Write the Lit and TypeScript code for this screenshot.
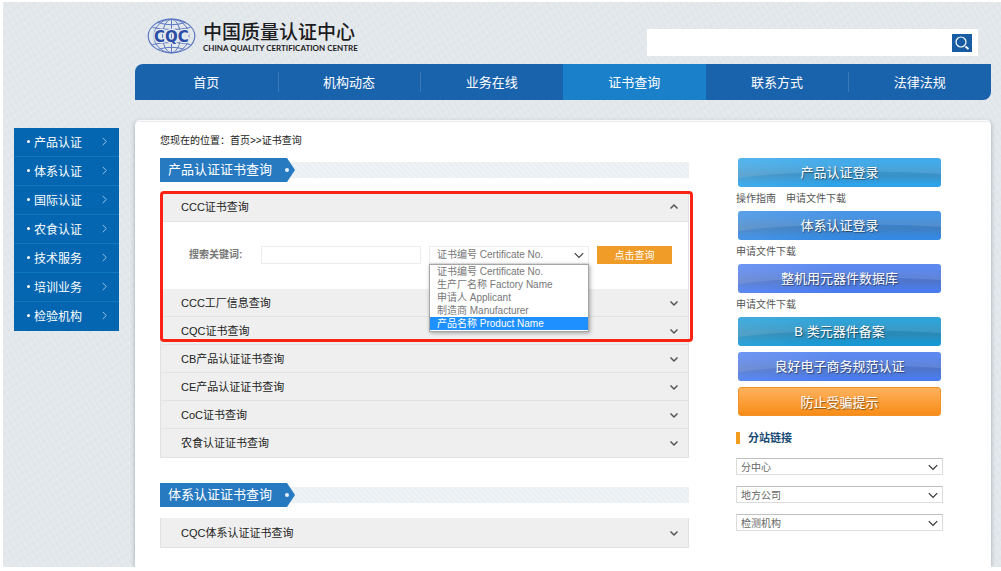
import { LitElement, html, css, svg } from "lit";
import { customElement, property, state } from "lit/decorators.js";
import { classMap } from "lit/directives/class-map.js";

const chevron = (dir: "up" | "down" | "right", cls: string) => {
  const d = { up: "M1.5 6.5 5 3l3.5 3.5", down: "M1.5 3.5 5 7l3.5-3.5", right: "M3 1l4 4-4 4" }[dir];
  return html`<svg class=${cls} viewBox="0 0 10 10" aria-hidden="true">${svg`<path d=${d} fill="none" stroke="currentColor"/>`}</svg>`;
};

@customElement("site-logo")
export class SiteLogo extends LitElement {
  static styles = css`
    :host { display: block; }
    .brand { display: flex; align-items: center; gap: 7px; color: #1c1c1e; text-decoration: none; }
    .globe { width: 49px; height: 36px; flex: none; }
    .mark { font: bold 15px "DejaVu Sans", sans-serif; }
    .names { display: flex; flex-direction: column; }
    .zh { font: 500 19px/24px "Noto Sans CJK SC", sans-serif; }
    .en { font: 700 8px/10px Lato, sans-serif; white-space: nowrap; }
  `;
  render() {
    return html`<a class="brand" href="#">
      <svg class="globe" viewBox="0 0 49 36" role="img" aria-label="CQC">
        <g fill="none" stroke="#5b77c2" stroke-width="1">
          <ellipse cx="24.5" cy="18" rx="23.3" ry="16.8" stroke-width="1.2" />
          <ellipse cx="24.5" cy="18" rx="17.5" ry="16.8" />
          <ellipse cx="24.5" cy="18" rx="9" ry="16.8" />
          <path d="M24.5 1v34M11 4.5q13.500 4.500 27 0M5.500 9.500q19 4 38 0M5.500 26.500q19-4 38 0M11 31.500q13.500-4.500 27 0" />
        </g>
        <text class="mark" x="24.500" y="23.500" text-anchor="middle" fill="#2c4da6" stroke="#e6ebf0" stroke-width="2.500" paint-order="stroke">CQC</text>
      </svg>
      <span class="names">
        <span class="zh">中国质量认证中心</span>
        <span class="en">CHINA QUALITY CERTIFICATION CENTRE</span>
      </span>
    </a>`;
  }
}

@customElement("section-title")
export class SectionTitle extends LitElement {
  @property() text = "";
  static styles = css`
    :host { display: block; }
    .bar { display: flex; align-items: center; }
    .title {
      position: relative; z-index: 1; display: flex; align-items: center; gap: 13px; flex: none;
      box-sizing: border-box; width: 135px; height: 24px; margin: 0; padding-left: 8px;
      background: #2779c0; color: #fff; font-weight: 400; font-size: 13px; line-height: 24px;
      clip-path: polygon(0 0, 127px 0, 100% 50%, 127px 100%, 0 100%);
    }
    .dot { width: 4px; height: 4px; border-radius: 50%; background: #e4f0fa; }
    .stripe {
      flex: 1; height: 16px; margin-left: -8px;
      background: repeating-linear-gradient(45deg, #e9eff3 0 2px, #eff3f6 2px 4px);
    }
  `;
  render() {
    return html`<div class="bar"><h2 class="title">${this.text}<span class="dot"></span></h2><div class="stripe"></div></div>`;
  }
}

@customElement("link-select")
export class LinkSelect extends LitElement {
  @property() label = "";
  static styles = css`
    :host { display: block; }
    .box { display: grid; align-items: center; }
    .box > * { grid-area: 1 / 1; }
    .field {
      appearance: none; box-sizing: border-box; width: 100%; height: 17px; margin: 0; padding: 0 20px 0 4px;
      border: 1px solid #dcdcdc; border-top-color: #bfbfbf; border-radius: 0; background: #fff;
      color: #666; font: 10px/15px "Noto Sans CJK SC", sans-serif;
    }
    .arrow { justify-self: end; width: 12px; height: 12px; margin-right: 4px; color: #333; pointer-events: none; }
  `;
  render() {
    return html`<div class="box">
      <select class="field" aria-label=${this.label}><option>${this.label}</option></select>
      ${chevron("down", "arrow")}
    </div>`;
  }
}

const OPTIONS = ["证书编号 Certificate No.", "生产厂名称 Factory Name", "申请人 Applicant", "制造商 Manufacturer", "产品名称 Product Name"];

@customElement("search-form")
export class SearchForm extends LitElement {
  @state() private choice = 0;
  static styles = css`
    :host { display: block; }
    .form { display: flex; align-items: center; gap: 8px; padding: 24px 16px 25px 28px; background: #fff; }
    .label { flex: none; width: 64px; color: #777; font-weight: 700; font-size: 10px; line-height: 16px; }
    .input, .select {
      box-sizing: border-box; width: 100%; height: 18px; margin: 0; border: 1px solid #ececec; border-radius: 0;
      background: #fff; color: #777; font: 10px/16px "Liberation Sans", "Noto Sans CJK SC", sans-serif;
    }
    .input { flex: 1; min-width: 0; padding: 0 6px; }
    .select { appearance: none; padding: 0 20px 0 7px; }
    .picker { position: relative; display: grid; align-items: center; flex: none; width: 160px; }
    .picker > .select, .picker > .arrow { grid-area: 1 / 1; }
    .arrow { justify-self: end; width: 12px; height: 12px; margin-right: 4px; color: #444; pointer-events: none; }
    .menu {
      position: absolute; z-index: 5; top: 100%; left: 0; right: 0; margin: 0; list-style: none;
      background: #fff; border: 1px solid #a5a5a5; padding: 0 0 1px; box-shadow: 1px 1px 4px rgba(0, 0, 0, .35);
    }
    .option { padding: 0 7px; color: #777; font: 10px/13px "Liberation Sans", "Noto Sans CJK SC", sans-serif; white-space: nowrap; }
    .current { background: #1e90ff; color: #fff; }
    .submit { flex: none; width: 75px; height: 18px; padding: 0; border: 0; background: #f09c28; color: #fff; font: 10px/18px "Noto Sans CJK SC", sans-serif; }
  `;
  render() {
    return html`<form class="form" @submit=${(e: Event) => e.preventDefault()}>
      <label class="label" for="keyword">搜索关键词:</label>
      <input class="input" id="keyword" type="text" />
      <div class="picker">
        <select class="select" aria-label="查询类型" @change=${(e: Event) => (this.choice = (e.target as HTMLSelectElement).selectedIndex)}>
          ${OPTIONS.map((o, i) => html`<option ?selected=${i === this.choice}>${o}</option>`)}
        </select>
        ${chevron("down", "arrow")}
        <ul class="menu">
          ${OPTIONS.map((o, i) => html`<li class=${classMap({ option: true, current: i === 4 })}>${o}</li>`)}
        </ul>
      </div>
      <button class="submit">点击查询</button>
    </form>`;
  }
}

const NAV = ["首页", "机构动态", "业务在线", "证书查询", "联系方式", "法律法规"];
const SIDE = ["产品认证", "体系认证", "国际认证", "农食认证", "技术服务", "培训业务", "检验机构"];
const ROWS = ["CCC工厂信息查询", "CQC证书查询", "CB产品认证证书查询", "CE产品认证证书查询", "CoC证书查询", "农食认证证书查询"];
const LOGINS = [
  { text: "产品认证登录", tone: "sky", links: ["操作指南", "申请文件下载"] },
  { text: "体系认证登录", tone: "azure", links: ["申请文件下载"] },
  { text: "整机用元器件数据库", tone: "indigo", links: ["申请文件下载"] },
  { text: "B 类元器件备案", tone: "teal", links: [] },
  { text: "良好电子商务规范认证", tone: "indigo", links: [] },
  { text: "防止受骗提示", tone: "orange", links: [] },
];

@customElement("app-root")
export class AppRoot extends LitElement {
  static styles = css`
    :host {
      display: block; box-sizing: border-box; min-height: 100vh; padding: 2px 0 4px 3px; background: #fff;
      color: #222; font-family: "Liberation Sans", "Noto Sans CJK SC", sans-serif; font-size: 10px;
    }
    .page {
      display: grid; grid-template-columns: 105px minmax(0, 1fr); grid-template-rows: auto auto 1fr; column-gap: 16px;
      box-sizing: border-box; min-height: calc(100vh - 6px); padding: 0 10px 0 11px; overflow: hidden;
      background:
        repeating-linear-gradient(60deg, rgba(255, 255, 255, .12) 0 2px, transparent 2px 5px),
        repeating-linear-gradient(-35deg, rgba(190, 203, 212, .08) 0 2px, transparent 2px 7px),
        #e2e7eb;
    }
    .header { grid-column: 2; display: flex; justify-content: space-between; align-items: flex-start; height: 46px; padding: 16px 13px 0 12px; }
    .search { display: flex; align-items: center; width: 331px; height: 27px; margin-top: 11px; background: #fff; }
    .query { flex: 1; min-width: 0; height: 25px; padding: 0 8px; border: 0; background: none; font: inherit; }
    .go { width: 20px; height: 18px; margin-right: 6px; padding: 0; border: 0; background: #185ca3; color: #fff; }
    .lens { display: block; width: 20px; height: 18px; }
    .nav { grid-column: 2; display: flex; height: 36px; background: #1962ac; border-radius: 8px 0 8px 0; overflow: hidden; }
    .tab {
      display: flex; flex: 1; align-items: center; justify-content: center; padding-bottom: 1px;
      color: #fff; font-size: 13px; text-decoration: none;
    }
    .tab + .tab { background: linear-gradient(#3a7abb, #3a7abb) left center / 1px 20px no-repeat; }
    .tab + .tab.active { background: #1a80ca; }
    .tab.active + .tab { background: none; }
    .side { margin-top: 28px; align-self: start; }
    .item {
      display: flex; align-items: center; box-sizing: border-box; height: 29px; padding: 0 10px 1px 13px;
      border-bottom: 1px solid #0f78bd; background: #0466b0; color: #fff; font-size: 12px; text-decoration: none;
    }
    .item:last-child { border-bottom-color: #0466b0; }
    .bullet { width: 3px; height: 3px; margin-right: 4px; border-radius: 50%; background: #fff; }
    .next { width: 9px; height: 9px; margin-left: auto; color: #a5cdec; }
    .panel {
      display: grid; grid-template-columns: minmax(0, 1fr) 207px; column-gap: 47px; align-items: start;
      margin-top: 22px; padding: 11px 48px 18px 25px; background: #fff; border-radius: 4px 4px 0 0;
      box-shadow: 0 -1px 0 #e9ecee, 0 -3px 0 -1px #fafbfc, 0 0 4px rgba(90, 105, 120, .5);
    }
    .crumbs { margin-bottom: 9px; line-height: 16px; }
    .crumb { color: inherit; text-decoration: none; }
    .list { position: relative; margin-top: 11px; border: 1px solid #e2e2e2; border-top: 0; }
    .list + section-title { margin-top: 25px; }
    .row {
      display: flex; align-items: center; justify-content: space-between; box-sizing: border-box; width: 100%; height: 28px;
      padding: 0 9px 0 20px; border: 0; border-bottom: 1px solid #e2e2e2; background: #efefef; color: #222;
      font: 11px/16px "Liberation Sans", "Noto Sans CJK SC", sans-serif; text-align: left;
    }
    .row:last-of-type { border-bottom: 0; }
    .tall { height: 29px; }
    .caret { width: 10px; height: 10px; color: #555; stroke-width: 1.5; }
    .frame { position: absolute; inset: -2px -5px auto -1px; height: 145px; border: 3px solid #fb2414; border-radius: 4px; pointer-events: none; }
    .aside { padding-top: 25px; }
    .login {
      display: block; width: 203px; height: 29px; margin: 0 2px; border-radius: 3px; box-sizing: border-box;
      color: #fff; font-size: 13px; line-height: 30px; text-align: center; text-decoration: none; text-shadow: 1px 1px 1px rgba(0, 0, 0, .45);
    }
    .login + .login { margin-top: 6px; }
    .glossy {
      background-image:
        radial-gradient(ellipse 75% 55% at 60% 100%, rgba(255, 255, 255, 0) 95%, rgba(255, 255, 255, .1) 100%),
        linear-gradient(100deg, rgba(255, 255, 255, .1), transparent 50%),
        linear-gradient(transparent 15%, rgba(90, 100, 110, .28) 60%, transparent 90%);
    }
    .sky { background-color: #2ea2e8; }
    .azure { background-color: #3489e2; }
    .indigo { background-color: #4b7cee; }
    .teal { background-color: #1898d3; }
    .orange { border: 1px solid #f0912a; background: linear-gradient(#ffb25e, #f78c17); line-height: 29px; }
    .files { display: flex; gap: 10px; height: 24px; line-height: 24px; }
    .file { color: #555; text-decoration: none; }
    .branches { margin: 16px 0 14px; padding-left: 8px; border-left: 4px solid #f39c1f; color: #174a72; font-size: 11px; line-height: 12px; }
    .selects { display: grid; gap: 11px; }
  `;

  render() {
    return html`<div class="page">
      <header class="header">
        <site-logo></site-logo>
        <form class="search" role="search" @submit=${(e: Event) => e.preventDefault()}>
          <input class="query" type="text" aria-label="搜索" />
          <button class="go" aria-label="搜索">
            <svg class="lens" viewBox="0 0 20 18"><circle cx="9" cy="8" r="5" fill="none" stroke="#fff" stroke-width="1.200" /><path d="M13.500 12.500l3 2.500" stroke="#fff" stroke-width="1.800" /></svg>
          </button>
        </form>
      </header>
      <nav class="nav">
        ${NAV.map((n, i) => html`<a href="#" class=${classMap({ tab: true, active: i === 3 })}>${n}</a>`)}
      </nav>
      <nav class="side">
        ${SIDE.map((n) => html`<a href="#" class="item"><span class="bullet"></span>${n}${chevron("right", "next")}</a>`)}
      </nav>
      <main class="panel">
        <div>
          <div class="crumbs">您现在的位置：<a class="crumb" href="#">首页</a>&gt;&gt;<a class="crumb" href="#">证书查询</a></div>
          <section-title text="产品认证证书查询"></section-title>
          <div class="list">
            <button class="row tall" aria-expanded="true">CCC证书查询${chevron("up", "caret")}</button>
            <search-form></search-form>
            ${ROWS.map((r) => html`<button class="row" aria-expanded="false">${r}${chevron("down", "caret")}</button>`)}
            <div class="frame"></div>
          </div>
          <section-title text="体系认证证书查询"></section-title>
          <div class="list">
            <button class="row tall" aria-expanded="false">CQC体系认证证书查询${chevron("down", "caret")}</button>
          </div>
        </div>
        <aside class="aside">
          ${LOGINS.map((l) => html`<a href="#" class=${classMap({ login: true, glossy: l.tone !== "orange", [l.tone]: true })}>${l.text}</a>
            ${l.links.length ? html`<div class="files">${l.links.map((t) => html`<a class="file" href="#">${t}</a>`)}</div>` : ""}`)}
          <h3 class="branches">分站链接</h3>
          <div class="selects">
            ${["分中心", "地方公司", "检测机构"].map((t) => html`<link-select label=${t}></link-select>`)}
          </div>
        </aside>
      </main>
    </div>`;
  }
}
